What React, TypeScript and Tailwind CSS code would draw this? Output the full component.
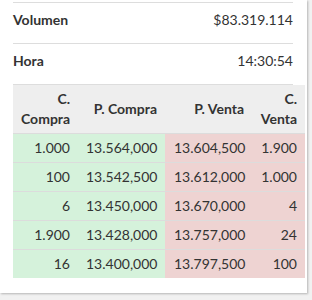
import React from 'react';

const rows = [
  ['1.000', '13.564,000', '13.604,500', '1.900'],
  ['100', '13.542,500', '13.612,000', '1.000'],
  ['6', '13.450,000', '13.670,000', '4'],
  ['1.900', '13.428,000', '13.757,000', '24'],
  ['16', '13.400,000', '13.797,500', '100'],
];

const App: React.FC = () => {
  return (
    <div className="w-[312px] h-[300px] bg-[#f1f1f1] overflow-hidden" style={{ fontFamily: 'Lato, "Open Sans", sans-serif' }}>
      <div className="w-[307px] h-[293px] bg-white shadow-[1px_1px_2px_rgba(0,0,0,0.25)] pl-[13px] pt-[2px] text-[14px] text-[#333]">
        <div className="w-[280px]">
          <div className="flex justify-between items-start h-[41px] pt-[7px] leading-[20px] border-t border-[#dddddd]">
            <span className="font-bold">Volumen</span>
            <span>$83.319.114</span>
          </div>
          <div className="flex justify-between items-start h-[41px] pt-[7px] leading-[20px] border-t border-[#dddddd]">
            <span className="font-bold">Hora</span>
            <span>14:30:54</span>
          </div>
        </div>
        <div className="w-[280px] border-t border-[#dddddd]" />
        <table className="w-[292px] table-fixed border-collapse leading-[20px] text-right">
          <colgroup>
            <col className="w-[65px]" />
            <col className="w-[87px]" />
            <col className="w-[87px]" />
            <col className="w-[53px]" />
          </colgroup>
          <thead>
            <tr className="bg-[#eeeeee] font-bold">
              <th className="px-2 py-1 align-middle">C.<br />Compra</th>
              <th className="px-2 py-1 align-middle">P. Compra</th>
              <th className="px-2 py-1 align-middle">P. Venta</th>
              <th className="px-2 py-1 align-middle">C.<br />Venta</th>
            </tr>
          </thead>
          <tbody>
            {rows.map((r, i) => (
              <tr key={i} className="border-t border-[#dcdcdc]">
                <td className="px-2 py-1 bg-[#d5f2db]">{r[0]}</td>
                <td className="px-2 py-1 bg-[#d5f2db]">{r[1]}</td>
                <td className="px-2 py-1 bg-[#eed3d2] text-left pl-[9px]">{r[2]}</td>
                <td className="px-2 py-1 bg-[#eed3d2]">{r[3]}</td>
              </tr>
            ))}
          </tbody>
        </table>
      </div>
    </div>
  );
};

export default App;
